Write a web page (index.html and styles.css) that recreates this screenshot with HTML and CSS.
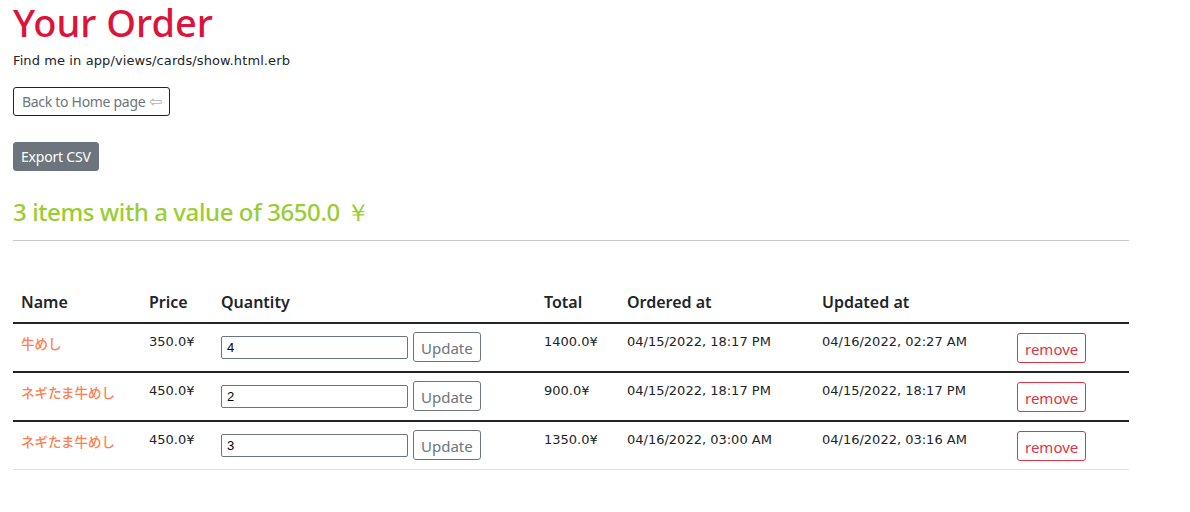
FILE: index.html
```html
<!DOCTYPE html>
<html lang="ja">
<head>
    <meta charset="UTF-8">
    <meta name="viewport" content="width=device-width, initial-scale=1.0">
    <title>Your Order</title>
    <link rel="stylesheet" href="styles.css">
</head>
<body>
    <div class="container">
        <h1 class="page-title">Your Order</h1>
        <p class="hint">Find me in app/views/cards/show.html.erb</p>

        <div class="actions">
            <a href="#" class="btn btn-back">Back to Home page <span class="arrow">⇦</span></a>
            <a href="#" class="btn btn-export">Export CSV</a>
        </div>

        <h3 class="summary">3 items with a value of 3650.0 ￥</h3>
        <hr class="divider">

        <table class="order-table">
            <thead>
                <tr>
                    <th class="col-name">Name</th>
                    <th class="col-price">Price</th>
                    <th class="col-qty">Quantity</th>
                    <th class="col-total">Total</th>
                    <th class="col-ordered">Ordered at</th>
                    <th class="col-updated">Updated at</th>
                    <th class="col-action"></th>
                </tr>
            </thead>
            <tbody id="orderRows">
                <tr>
                    <td class="item-name">牛めし</td>
                    <td class="mono">350.0¥</td>
                    <td><form class="qty-form"><input type="text" class="qty-input" value="4"><button type="button" class="btn btn-update">Update</button></form></td>
                    <td class="mono">1400.0¥</td>
                    <td class="mono">04/15/2022, 18:17 PM</td>
                    <td class="mono">04/16/2022, 02:27 AM</td>
                    <td><button type="button" class="btn btn-remove">remove</button></td>
                </tr>
                <tr>
                    <td class="item-name">ネギたま牛めし</td>
                    <td class="mono">450.0¥</td>
                    <td><form class="qty-form"><input type="text" class="qty-input" value="2"><button type="button" class="btn btn-update">Update</button></form></td>
                    <td class="mono">900.0¥</td>
                    <td class="mono">04/15/2022, 18:17 PM</td>
                    <td class="mono">04/15/2022, 18:17 PM</td>
                    <td><button type="button" class="btn btn-remove">remove</button></td>
                </tr>
                <tr class="last-row">
                    <td class="item-name">ネギたま牛めし</td>
                    <td class="mono">450.0¥</td>
                    <td><form class="qty-form"><input type="text" class="qty-input" value="3"><button type="button" class="btn btn-update">Update</button></form></td>
                    <td class="mono">1350.0¥</td>
                    <td class="mono">04/16/2022, 03:00 AM</td>
                    <td class="mono">04/16/2022, 03:16 AM</td>
                    <td><button type="button" class="btn btn-remove">remove</button></td>
                </tr>
            </tbody>
        </table>
    </div>
</body>
</html>
```

FILE: styles.css
```css
* {
    margin: 0;
    padding: 0;
    box-sizing: border-box;
}

body {
    font-family: 'Noto Sans', 'Open Sans', sans-serif;
    font-size: 16px;
    line-height: 1.5;
    color: #212529;
    background: #fff;
}

.container {
    width: 1116px;
    margin-left: 13px;
    padding-top: 1px;
}

.page-title {
    color: #dc143c;
    font-size: 38px;
    font-weight: 500;
    line-height: 43px;
}

.hint {
    font-family: 'DejaVu Sans', Verdana, sans-serif;
    font-size: 13px;
    line-height: 20px;
    margin-top: 7px;
    letter-spacing: 0.1px;
}

.actions {
    display: flex;
    flex-direction: column;
    align-items: flex-start;
    gap: 26px;
    margin-top: 16px;
}

.btn {
    display: inline-block;
    font-family: 'Noto Sans', 'Open Sans', sans-serif;
    font-size: 14px;
    line-height: 21px;
    padding: 3px 8px;
    border: 1px solid transparent;
    border-radius: 3px;
    text-decoration: none;
    background: #fff;
    cursor: pointer;
}

.arrow {
    font-family: 'DejaVu Sans', sans-serif;
    color: #adb5bd;
    font-size: 16px;
    line-height: 1;
}

.btn-back {
    color: #6c757d;
    border-color: #212529;
    letter-spacing: -0.3px;
    padding: 3px 7px 3px 8px;
}

.btn-export {
    color: #fff;
    background: #6c757d;
    border-color: #6c757d;
    padding: 3px 7px;
    letter-spacing: -0.2px;
}

.summary {
    color: #9acd32;
    font-size: 24px;
    font-weight: 500;
    line-height: 32px;
    letter-spacing: -0.4px;
    margin-top: 25px;
}

.divider {
    border: 0;
    border-top: 1px solid #c8c8c8;
    margin-top: 12px;
}

.order-table {
    width: 100%;
    border-collapse: collapse;
    table-layout: fixed;
    margin-top: 41px;
}

.order-table th {
    text-align: left;
    font-weight: 600;
    padding: 8px;
    line-height: 24px;
    border-bottom: 2px solid #212529;
}

.order-table td {
    vertical-align: top;
    padding: 8px;
    border-bottom: 2px solid #212529;
}

.order-table .last-row td {
    border-bottom: 1px solid #dee2e6;
}

.col-name { width: 128px; }
.col-price { width: 72px; }
.col-qty { width: 323px; }
.col-total { width: 83px; }
.col-ordered { width: 195px; }
.col-updated { width: 195px; }

.order-table .item-name {
    color: #ff7f50;
    font-family: 'Noto Sans CJK JP', sans-serif;
    font-size: 13.5px;
    font-weight: 500;
    line-height: 24px;
    padding-top: 7px;
}

.mono {
    font-family: 'DejaVu Sans', Verdana, sans-serif;
    font-size: 13px;
    line-height: 20px;
}

.qty-form {
    display: flex;
    align-items: center;
    gap: 5px;
}

.qty-input {
    width: 187px;
    height: 23px;
    border: 1px solid #6c757d;
    border-radius: 2px;
    padding: 0 5px;
    font-family: 'Liberation Sans', Arial, sans-serif;
    font-size: 13px;
    color: #000;
}

.btn-update {
    color: #6c757d;
    border-color: #6c757d;
    font-size: 15px;
    line-height: 20px;
    padding: 5px 7px 3px;
}

.btn-remove {
    color: #dc3545;
    border-color: #dc3545;
    font-size: 15px;
    line-height: 20px;
    padding: 5px 7px 3px;
    margin-top: 1px;
}
```
